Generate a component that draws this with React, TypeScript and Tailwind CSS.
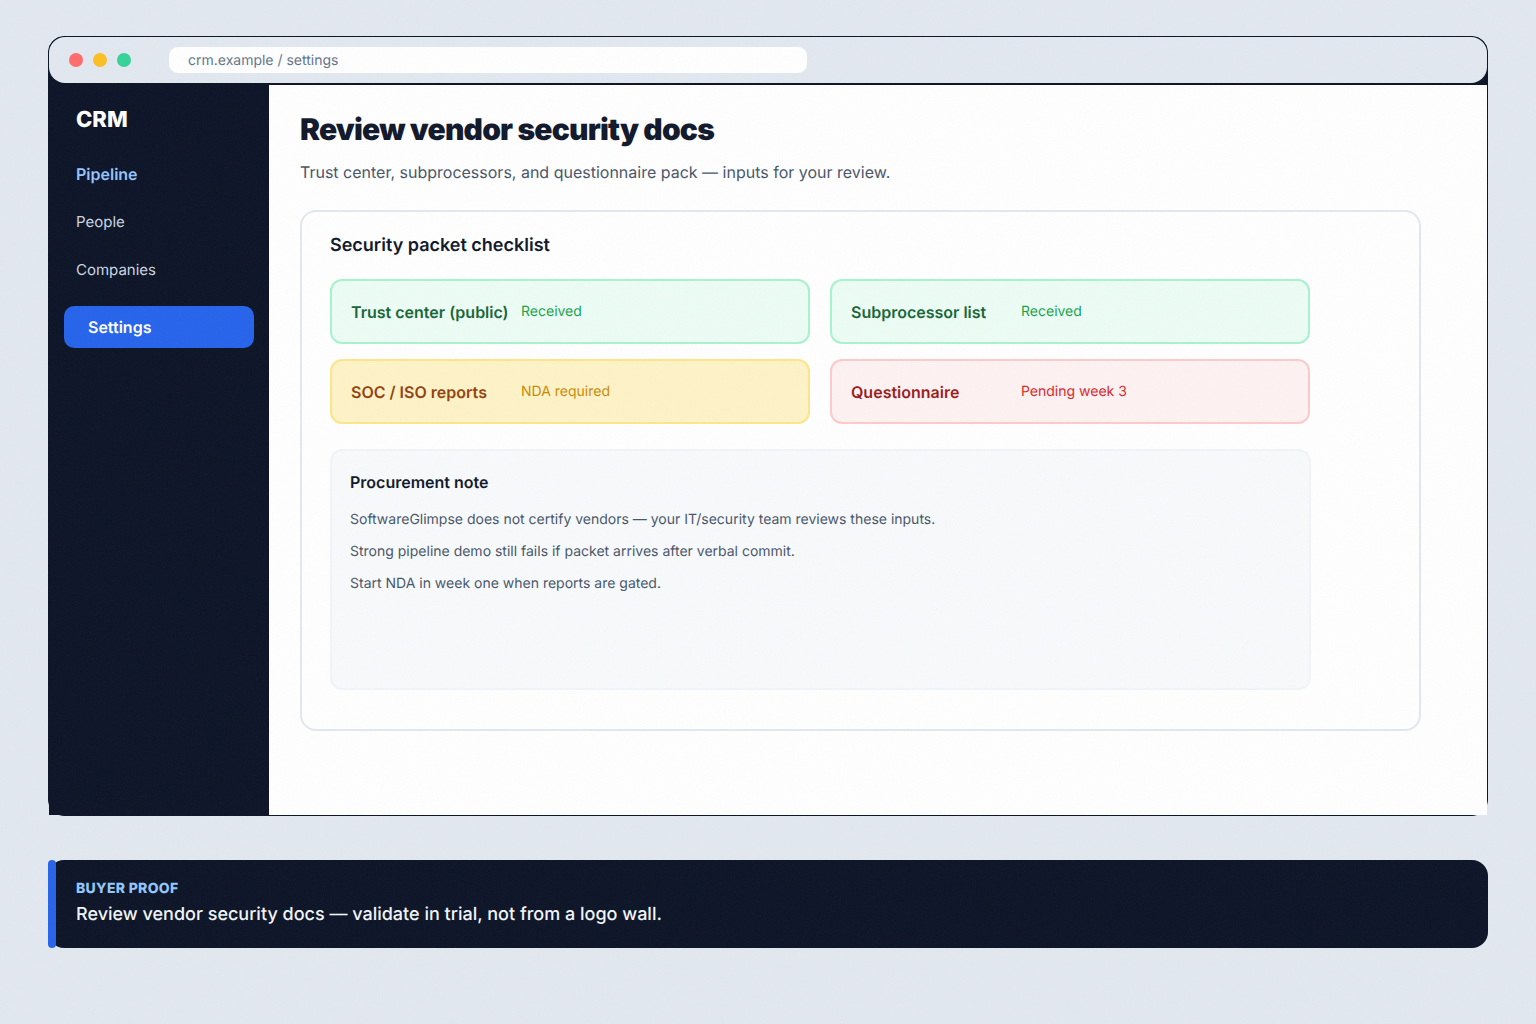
const font = { fontFamily: 'Inter, "Liberation Sans", sans-serif' };

const items = [
  {
    label: 'Trust center (public)',
    status: 'Received',
    box: 'bg-[#ecfdf5] border-[#a7f3d0]',
    title: 'text-[#166534]',
    sub: 'text-[#16a34a]',
  },
  {
    label: 'Subprocessor list',
    status: 'Received',
    box: 'bg-[#ecfdf5] border-[#a7f3d0]',
    title: 'text-[#166534]',
    sub: 'text-[#16a34a]',
  },
  {
    label: 'SOC / ISO reports',
    status: 'NDA required',
    box: 'bg-[#fef3c7] border-[#fde68a]',
    title: 'text-[#92400e]',
    sub: 'text-[#ca8a04]',
  },
  {
    label: 'Questionnaire',
    status: 'Pending week 3',
    box: 'bg-[#fef2f2] border-[#fecaca]',
    title: 'text-[#991b1b]',
    sub: 'text-[#dc2626]',
  },
];

function Sidebar() {
  return (
    <aside className="w-[220px] shrink-0 bg-[#0b1326] pt-[21px] px-[15px]">
      <div className="pl-3 text-[22px] leading-[28px] font-extrabold text-white">CRM</div>
      <nav className="mt-[16px] flex flex-col text-[15px] leading-[24px]">
        <a className="h-[48px] pl-3 pt-3 text-[16px] font-semibold text-[#93c5fd]">Pipeline</a>
        <a className="h-[48px] pl-3 pt-3 text-[#cbd5e1]">People</a>
        <a className="h-[48px] pl-3 pt-3 text-[#cbd5e1]">Companies</a>
        <a className="mt-[12px] flex h-[42px] items-center rounded-[10px] bg-[#2563eb] pl-6 text-[16px] font-semibold text-white">
          Settings
        </a>
      </nav>
    </aside>
  );
}

function Checklist() {
  return (
    <div className="grid grid-cols-[480px_480px] gap-[15px_20px]">
      {items.map((item) => (
        <div key={item.label} className={`flex h-[65px] items-center gap-[10px] rounded-xl border-2 px-[19px] ${item.box}`}>
          <span className={`min-w-[160px] text-[16px] font-semibold ${item.title}`}>{item.label}</span>
          <span className={`text-[14px] ${item.sub}`}>{item.status}</span>
        </div>
      ))}
    </div>
  );
}

function Main() {
  return (
    <main className="flex-1 bg-white pl-[31px] pt-[27px]">
      <h1 className="text-[30px] leading-[36px] font-black tracking-[-0.8px] text-[#0f172a]">Review vendor security docs</h1>
      <p className="mt-[12px] text-[16px] leading-[24px] text-[#475569]">
        Trust center, subprocessors, and questionnaire pack — inputs for your review.
      </p>
      <section className="mt-[26px] h-[521px] w-[1121px] rounded-2xl border-2 border-[#e2e8f0] bg-white pl-[28px] pt-[20px]">
        <h2 className="mb-[20px] text-[18px] leading-[27px] font-semibold text-[#0f172a]">Security packet checklist</h2>
        <Checklist />
        <div className="mt-[25px] h-[241px] w-[981px] rounded-xl border-2 border-[#f1f5f9] bg-[#f8fafc] pl-[18px] pt-[19px]">
          <h3 className="text-[16px] leading-[24px] font-semibold text-[#0f172a]">Procurement note</h3>
          <div className="mt-[15px] flex flex-col gap-[11px] text-[14px] leading-[21px] text-[#475569]">
            <p>SoftwareGlimpse does not certify vendors — your IT/security team reviews these inputs.</p>
            <p>Strong pipeline demo still fails if packet arrives after verbal commit.</p>
            <p>Start NDA in week one when reports are gated.</p>
          </div>
        </div>
      </section>
    </main>
  );
}

export default function App() {
  return (
    <div className="relative h-[1024px] overflow-hidden bg-[#e2e8f0] px-12 pt-9 antialiased [text-rendering:geometricPrecision]" style={font}>
      <div className="flex h-[780px] flex-col rounded-2xl border border-[#0b1326] bg-[#0b1326]">
        <div className="flex h-[46px] shrink-0 items-center rounded-2xl bg-[#e2e8f0] pl-5">
          <span className="h-[14px] w-[14px] rounded-full bg-[#ff6b6b]" />
          <span className="ml-[10px] h-[14px] w-[14px] rounded-full bg-[#fbbf24]" />
          <span className="ml-[10px] h-[14px] w-[14px] rounded-full bg-[#34d399]" />
          <div className="ml-[37px] flex h-[28px] w-[640px] items-center rounded-[10px] border border-[#e2e8f0] bg-white pl-[19px] text-[14px] text-[#64748b]">
            crm.example / settings
          </div>
        </div>
        <div className="mt-[2px] flex min-h-0 flex-1">
          <Sidebar />
          <Main />
        </div>
      </div>

      <div className="relative mt-11 h-[88px] rounded-2xl bg-[#0b1326] pl-7 pt-[18px]">
        <div className="absolute bottom-0 left-0 top-0 w-2 rounded bg-[#2563eb]" />
        <div className="text-[14px] leading-[21px] font-extrabold tracking-[0.3px] text-[#93c5fd]">BUYER PROOF</div>
        <div className="mt-[2px] text-[18px] leading-[27px] font-medium text-[#f1f5f9]">
          Review vendor security docs — validate in trial, not from a logo wall.
        </div>
      </div>

      <svg className="pointer-events-none absolute inset-0 h-full w-full opacity-[0.05]">
        <filter id="grain">
          <feTurbulence type="fractalNoise" baseFrequency="0.8" numOctaves="3" stitchTiles="stitch" />
        </filter>
        <rect width="100%" height="100%" filter="url(#grain)" />
      </svg>
    </div>
  );
}
